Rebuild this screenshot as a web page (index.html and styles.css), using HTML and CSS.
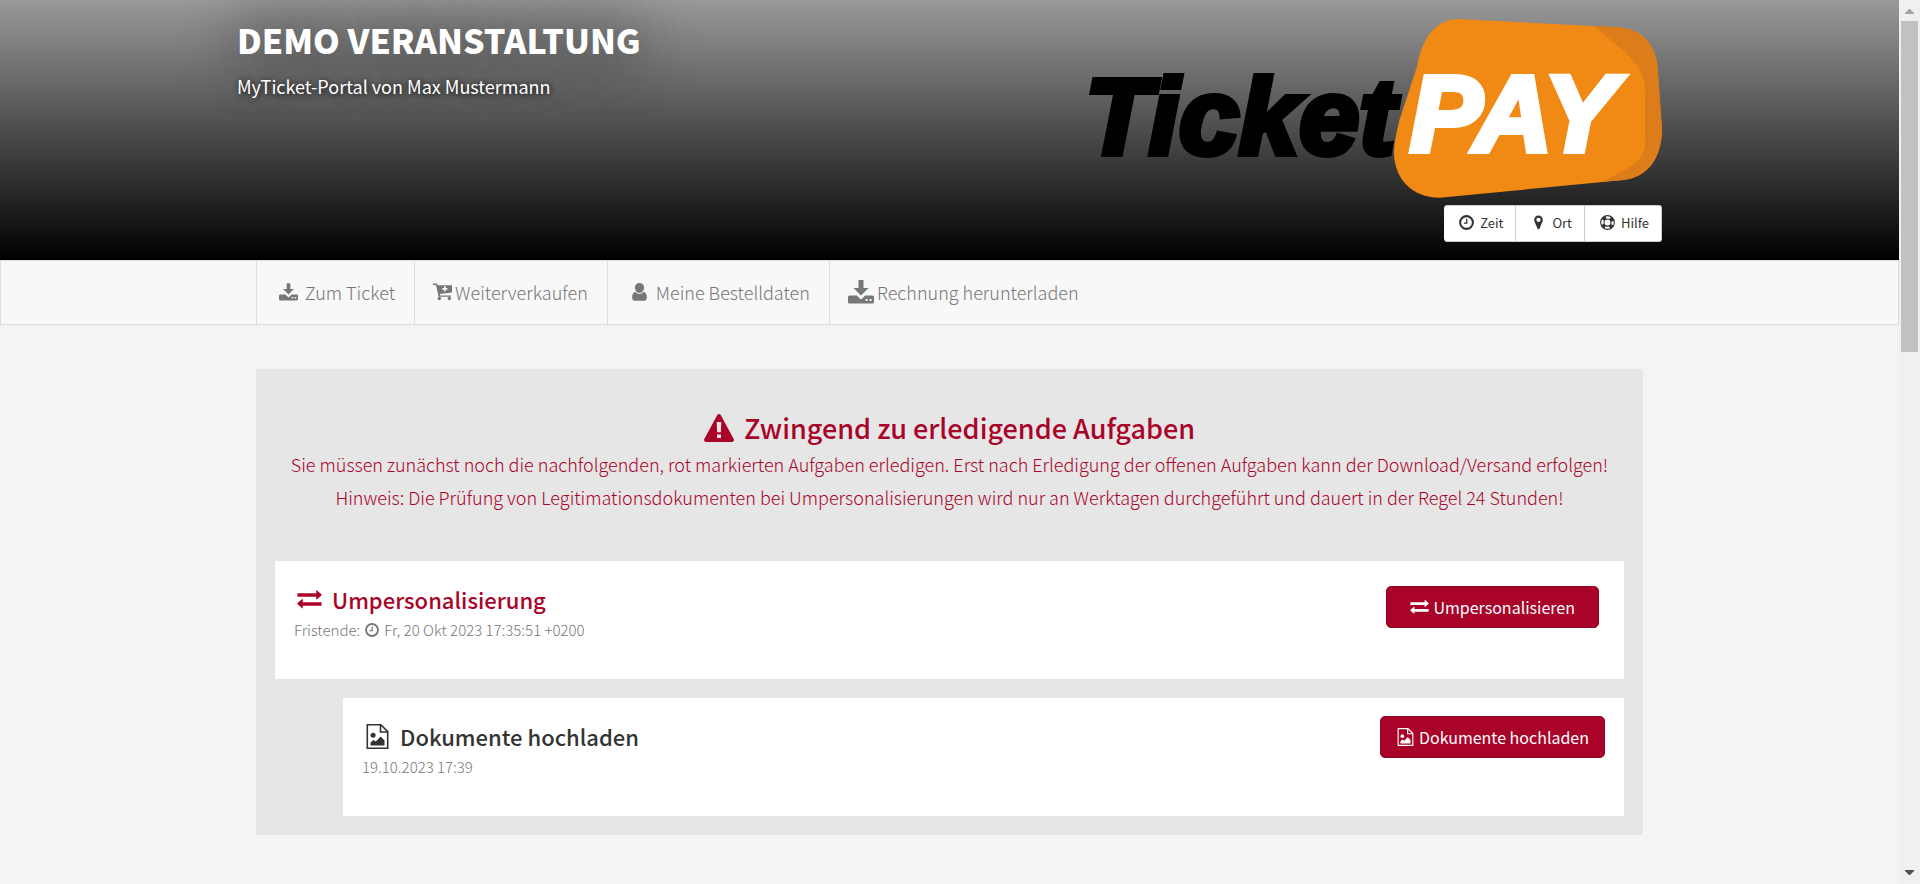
FILE: index.html
```
<!DOCTYPE html>
<html lang="de">
<head>
  <meta charset="UTF-8" />
  <meta name="viewport" content="width=device-width, initial-scale=1.0"/>
  <title>Demo Veranstaltung - MyTicket</title>
  <link rel="stylesheet" href="styles.css">
</head>
<body>
  <!-- icon set -->
  <svg class="sprite" aria-hidden="true">
    <symbol id="clock" viewBox="0 0 16 16">
      <circle cx="8" cy="8" r="6.8" fill="none" stroke="currentColor" stroke-width="2.2"/>
      <path d="M8.2 4v4.6H5.2" fill="none" stroke="currentColor" stroke-width="1.4"/>
    </symbol>
    <symbol id="marker" viewBox="0 0 16 16">
      <path fill-rule="evenodd" d="M8 0.5a4.6 4.6 0 0 1 4.6 4.6c0 .8-.1 1.400-.4 2L9 14.600a1.100 1.100 0 0 1-2 0L3.800 7.100c-.3-.6-.4-1.200-.4-2A4.600 4.600 0 0 1 8 .5zm0 2.300a2.300 2.300 0 1 0 0 4.600 2.300 2.300 0 0 0 0-4.600z"/>
    </symbol>
    <symbol id="ring" viewBox="0 0 16 16">
      <circle cx="8" cy="8" r="7.300" fill="none" stroke="currentColor" stroke-width="1.200"/>
      <circle cx="8" cy="8" r="3.800" fill="none" stroke="currentColor" stroke-width="1.200"/>
      <circle cx="8" cy="8" r="5.600" fill="none" stroke="currentColor" stroke-width="4" stroke-dasharray="4 4.796" stroke-dashoffset="-2.400"/>
    </symbol>
    <symbol id="user" viewBox="0 0 16 18">
      <path d="M8 0a4.600 4.600 0 0 1 4.600 4.600C12.600 7.300 10.500 10 8 10S3.400 7.300 3.400 4.600A4.600 4.600 0 0 1 8 0zM4 8.800c1 1.400 2.400 2.200 4 2.200s3-.8 4-2.200c2.400.5 3.400 2.800 3.400 5.600 0 2-1.200 3.300-2.800 3.300H3.400c-1.600 0-2.800-1.300-2.800-3.300C.6 11.600 1.600 9.300 4 8.800z"/>
    </symbol>
    <symbol id="download" viewBox="0 0 26 24">
      <path fill-rule="evenodd" d="M10.500 0h5v8h5L13 15.500 5.500 8h5zM1.500 15.500h7.200L13 19.500l4.300-4H24.500q1.500 0 1.500 1.500v5q0 1.500-1.500 1.500h-23Q0 23.500 0 22v-5q0-1.500 1.500-1.500zM17.500 19v2h2v-2zM21.500 19v2h2v-2z"/>
    </symbol>
    <symbol id="cart" viewBox="0 0 18 16">
      <path fill-rule="evenodd" d="M0 0h3.800l.6 1.600H18v6.800L6.600 10l.3 1.200H17v1.400H5.400L2.800 1.400H0zM10.400 2.600v1.600H8.800v1.600h1.600v1.600H12V5.800h1.600V4.200H12V2.600z"/>
      <circle cx="6" cy="14.200" r="1.600"/><circle cx="15.500" cy="14.200" r="1.600"/>
    </symbol>
    <symbol id="warning" viewBox="0 0 30 28">
      <path fill-rule="evenodd" d="M15 0q1.100 0 1.700 1l13 24q.6 1-.1 2-.6 1-1.600 1H2q-1 0-1.600-1-.7-1-.1-2l13-24q.6-1 1.700-1zM12.700 8.600l.4 9.200q0 .5.600.5h2.600q.6 0 .6-.5l.4-9.200q0-.6-.6-.6h-3.400q-.6 0-.6.600zM13 20.600v3.300h4v-3.300z"/>
    </symbol>
    <symbol id="exchange" viewBox="0 0 26 20">
      <path d="M.5 3.500H20V.600q0-.6.6-.3l5 4.400q.4.400 0 .8l-5 4.400q-.6.300-.6-.3V7.200H.500zM25.500 12.800H6V9.900q0-.6-.6-.3l-5 4.400q-.4.400 0 .8l5 4.400q.6.300.6-.3V16.500h19.500z"/>
    </symbol>
    <symbol id="image" viewBox="0 0 22 25">
      <path fill="none" stroke="currentColor" stroke-width="1.600" d="M.8.800h13.600l6.800 6.800v16.600H.8zM14 .8v7.200h7.200"/>
      <circle cx="6.600" cy="11.300" r="2.500"/>
      <path d="M4 21.500v-3l3-2.500 2.200 1.600 5-5L18 16.600v4.900z"/>
    </symbol>
  </svg>

  <div class="page">
    <header class="header">
      <div class="container header-row">
        <div class="event">
          <h1>DEMO VERANSTALTUNG</h1>
          <p>MyTicket-Portal von Max Mustermann</p>
        </div>
        <div class="brand">
          <svg class="logo" viewBox="0 0 573 181" role="img" aria-label="TicketPAY">
            <path fill="#f18a14" d="M368.500 1L528.600 9.300C551 11 566 24 568.500 48.700L573 112C572 142 558 159 534.600 162L350.700 179.700C323 180 304 160 305 132Q305.500 122 310.400 102L328 48.700C333 22 345 2 368.500 1z"/>
            <path fill="#dd7d1a" d="M504.500 8L528.600 9.300C551 11 566 24 568.500 48.700L573 112C572 142 558 159 534.600 162L513 163.700C538 151 556 144 556 125V72C556 48 540 37 504.500 8z"/>
            <text class="logo-ticket" x="-4" y="136">Ticket</text>
            <text class="logo-pay" x="321" y="133">PAY</text>
          </svg>
          <div class="btn-group">
            <button class="btn-small"><svg class="icon"><use href="#clock"/></svg>Zeit</button>
            <button class="btn-small"><svg class="icon"><use href="#marker"/></svg>Ort</button>
            <button class="btn-small"><svg class="icon"><use href="#ring"/></svg>Hilfe</button>
          </div>
        </div>
      </div>
    </header>

    <nav class="nav">
      <div class="container nav-row">
        <a class="nav-link" href="#"><svg class="icon icon-nav"><use href="#download"/></svg>Zum Ticket</a>
        <a class="nav-link tight" href="#"><svg class="icon icon-nav"><use href="#cart"/></svg>Weiterverkaufen</a>
        <a class="nav-link" href="#"><svg class="icon icon-nav"><use href="#user"/></svg>Meine Bestelldaten</a>
        <a class="nav-link tight" href="#"><svg class="icon icon-big"><use href="#download"/></svg>Rechnung herunterladen</a>
      </div>
    </nav>

    <main class="container">
      <section class="tasks">
        <div class="tasks-intro">
          <h2><svg class="icon icon-warning"><use href="#warning"/></svg>Zwingend zu erledigende Aufgaben</h2>
          <p>Sie müssen zunächst noch die nachfolgenden, rot markierten Aufgaben erledigen. Erst nach Erledigung der offenen Aufgaben kann der Download/Versand erfolgen!</p>
          <p>Hinweis: Die Prüfung von Legitimationsdokumenten bei Umpersonalisierungen wird nur an Werktagen durchgeführt und dauert in der Regel 24 Stunden!</p>
        </div>

        <article class="card">
          <div>
            <h3 class="required"><svg class="icon icon-title"><use href="#exchange"/></svg>Umpersonalisierung</h3>
            <p class="meta">Fristende: <svg class="icon icon-meta"><use href="#clock"/></svg>Fr, 20 Okt 2023 17:35:51 +0200</p>
          </div>
          <button class="btn btn-wide"><svg class="icon icon-btn"><use href="#exchange"/></svg>Umpersonalisieren</button>
        </article>

        <article class="card card-sub">
          <div>
            <h3><svg class="icon icon-title"><use href="#image"/></svg>Dokumente hochladen</h3>
            <p class="meta">19.10.2023 17:39</p>
          </div>
          <button class="btn"><svg class="icon icon-btn"><use href="#image"/></svg>Dokumente hochladen</button>
        </article>
      </section>
    </main>
  </div>

  <div class="scrollbar" aria-hidden="true">
    <svg class="arrow arrow-up" viewBox="0 0 9 5"><path d="M4 0h1l4 4v1H0V4z"/></svg>
    <div class="thumb"></div>
    <svg class="arrow arrow-down" viewBox="0 0 9 5"><path d="M0 0h9v1L5 5H4L0 1z"/></svg>
  </div>
</body>
</html>
```
FILE: styles.css
```
* { box-sizing: border-box; }
body { margin: 0; background: #f4f4f4; color: #333; font-family: "Noto Sans CJK SC", "Noto Sans", sans-serif; font-size: 18px; }
h1, h2, h3, p { margin: 0; }
button { font-family: inherit; cursor: pointer; }

.sprite { display: none; }
.icon { width: 15px; height: 15px; fill: currentColor; flex: none; }
.page { min-height: 100vh; padding-right: 21px; }
.container { max-width: 1425px; margin: 0 auto; padding: 0 19px; }

/* header */
.header { height: 260px; background: linear-gradient(#999, #000); }
.header-row { display: flex; justify-content: space-between; padding: 18px 0 0; }
.event { color: #fff; }
.event h1 { font-size: 34px; line-height: 44px; font-weight: 900; text-shadow: 0 0 60px #000; }
.event p { margin-top: 10px; font-size: 18px; line-height: 28px; text-shadow: 1px 1px 6px #000; }
.brand { display: flex; flex-direction: column; align-items: flex-end; gap: 6px; }
.logo { width: 573px; height: 181px; overflow: visible; }
.logo text { font-family: "Liberation Sans Narrow", "Liberation Sans", sans-serif; font-weight: 700; font-style: italic; font-size: 108px; stroke-width: 6px; }
.logo-ticket { fill: #000; stroke: #000; }
.logo-pay { fill: #fff; stroke: #fff; }
.btn-group { display: flex; border-radius: 4px; overflow: hidden; }
.btn-small { display: flex; align-items: center; gap: 6px; height: 37px; padding: 0 12px 2px 15px; border: 1px solid #ccc; border-left-width: 0; background: #fff; color: #333; font-size: 13px; }

/* navigation */
.nav { background: #f8f8f8; border: 1px solid #ddd; }
.nav-row { display: flex; }
.nav-link { display: flex; align-items: center; gap: 7px; height: 63px; padding: 0 19px 2px 22px; border-left: 1px solid #ddd; color: #777; font-weight: 300; text-decoration: none; }
.nav-link.tight { gap: 3px; padding-left: 18px; }
.icon-nav { width: 19px; height: 18px; }
.icon-big { width: 26px; height: 24px; }

/* open tasks */
.tasks { margin-top: 44px; padding: 38px 19px 19px; background: #e6e6e6; display: flex; flex-direction: column; gap: 19px; }
.tasks-intro { padding-bottom: 28px; color: #a90329; text-align: center; font-weight: 300; line-height: 33px; }
.tasks-intro h2 { display: flex; justify-content: center; align-items: center; gap: 10px; font-size: 27px; line-height: 41px; font-weight: 500; }
.icon-warning { width: 30px; height: 28px; }
.card { display: flex; justify-content: space-between; align-items: flex-start; min-height: 118px; padding: 18px 19px; background: #fff; }
.card-sub { margin-left: 68px; }
.card h3 { display: flex; align-items: center; gap: 10px; padding-left: 3px; font-size: 22px; line-height: 40px; font-weight: 500; }
.card h3.required { color: #a90329; }
.icon-title { width: 25px; height: 25px; }
.meta { display: flex; align-items: center; gap: 5px; color: #777; font-size: 15px; line-height: 22px; font-weight: 300; }
.icon-meta { width: 14px; height: 14px; }
.btn { display: flex; align-items: center; gap: 4px; height: 42px; padding: 0 15px; border: 1px solid #900323; border-radius: 5px; background: #a90329; color: #fff; font-size: 16px; }
.btn-wide { margin: 7px 6px 0 0; padding: 0 23px; }
.icon-btn { width: 19px; height: 18px; }

/* scrollbar */
.scrollbar { position: fixed; top: 0; right: 0; bottom: 0; width: 21px; padding: 9px 2px 9px; background: #f0f0f0; display: flex; flex-direction: column; align-items: center; }
.thumb { width: 17px; height: 331px; margin: 7px 0 auto; background: #c1c1c1; }
.arrow { width: 9px; height: 5px; }
.arrow-up { fill: #a3a3a3; }
.arrow-down { fill: #505050; }
```
